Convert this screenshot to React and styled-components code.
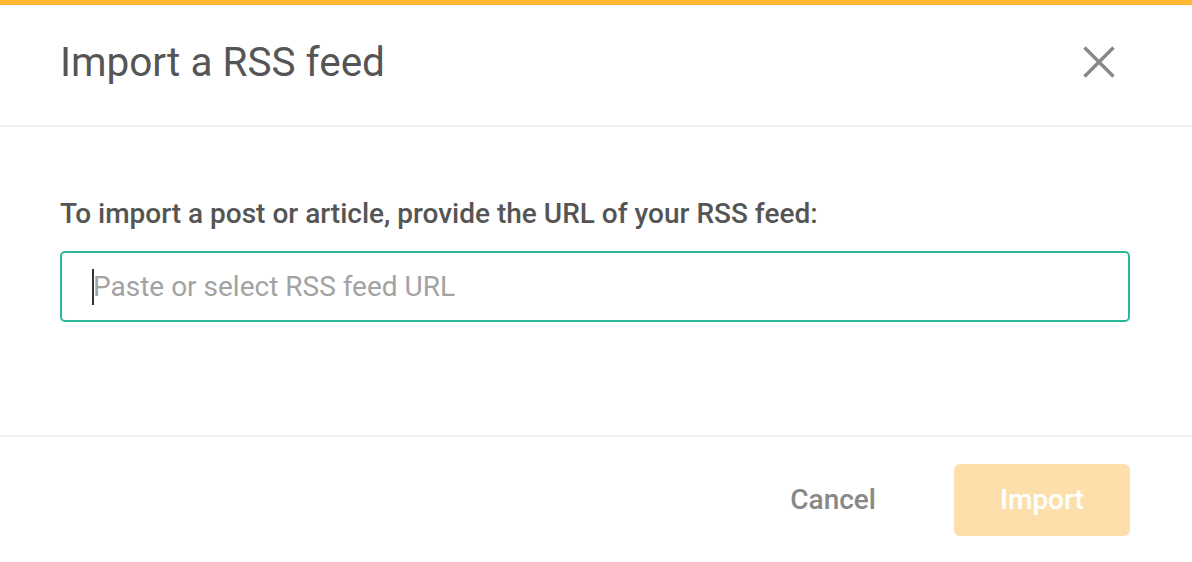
import React from 'react';
import styled, { createGlobalStyle } from 'styled-components';

const GlobalStyle = createGlobalStyle`
  html, body {
    margin: 0;
    padding: 0;
    background: #fff;
    font-family: Roboto, 'Noto Sans', sans-serif;
  }
`;

const Modal = styled.div`
  width: 1192px;
  height: 562px;
  border-top: 5px solid #FFB733;
  box-sizing: border-box;
  display: flex;
  flex-direction: column;
  background: #fff;
`;

const Header = styled.header`
  height: 122px;
  flex-shrink: 0;
  box-sizing: border-box;
  padding: 0 77px 6px 60px;
  display: flex;
  align-items: center;
  justify-content: space-between;
  border-bottom: 2px solid #f0f0f0;
`;

const Title = styled.h1`
  margin: 0;
  font-size: 40.5px;
  font-weight: 400;
  color: #555;
`;

const CloseButton = styled.button`
  border: none;
  background: none;
  padding: 0;
  width: 32px;
  height: 32px;
  display: flex;
  align-items: center;
  justify-content: center;
  cursor: pointer;
`;

const Body = styled.section`
  flex: 1;
  padding: 70px 62px 0 60px;
  border-bottom: 2px solid #f0f0f0;
`;

const Label = styled.label`
  display: block;
  font-size: 28px;
  font-weight: 500;
  color: #555;
  margin-bottom: 21px;
`;

const InputBox = styled.div`
  height: 71px;
  border: 2px solid #2BB89A;
  border-radius: 5px;
  box-sizing: border-box;
  display: flex;
  align-items: center;
  padding-left: 30px;
`;

const Caret = styled.span`
  width: 2px;
  height: 36px;
  margin-right: -1px;
  background: #333;
`;

const Input = styled.input`
  flex: 1;
  border: none;
  outline: none;
  font-family: inherit;
  font-size: 28px;
  color: #555;
  background: transparent;
  padding: 0;
  &::placeholder {
    color: #a3a3a3;
  }
`;

const Footer = styled.footer`
  height: 125px;
  flex-shrink: 0;
  padding: 0 62px 0 60px;
  display: flex;
  align-items: center;
  justify-content: flex-end;
  gap: 78px;
`;

const TextButton = styled.button`
  border: none;
  background: none;
  padding: 0;
  font-family: inherit;
  font-size: 28px;
  font-weight: 500;
  color: #888;
  cursor: pointer;
`;

const PrimaryButton = styled.button`
  width: 176px;
  height: 72px;
  border: none;
  border-radius: 6px;
  background: ${p => (p.disabled ? '#FDDFAB' : '#FFB733')};
  color: #fff;
  font-family: inherit;
  font-size: 28px;
  font-weight: 500;
`;

const App = () => (
  <>
    <GlobalStyle />
    <Modal>
      <Header>
        <Title>Import a RSS feed</Title>
        <CloseButton aria-label="Close">
          <svg width="32" height="32" viewBox="0 0 32 32">
            <path d="M1.5 1.5 L30.5 30.5 M30.5 1.5 L1.5 30.5" stroke="#888" strokeWidth="3.4" />
          </svg>
        </CloseButton>
      </Header>
      <Body>
        <Label>To import a post or article, provide the URL of your RSS feed:</Label>
        <InputBox>
          <Caret />
          <Input placeholder="Paste or select RSS feed URL" />
        </InputBox>
      </Body>
      <Footer>
        <TextButton>Cancel</TextButton>
        <PrimaryButton disabled>Import</PrimaryButton>
      </Footer>
    </Modal>
  </>
);

export default App;
